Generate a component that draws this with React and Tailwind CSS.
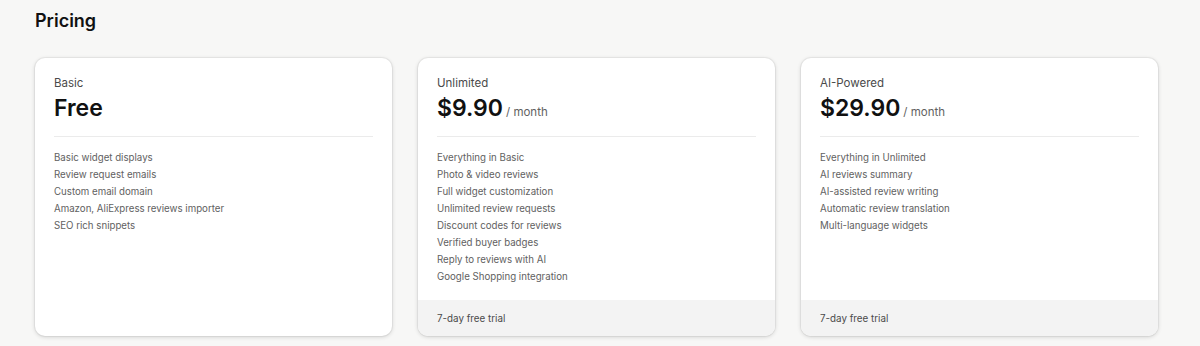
import React from "react";

const plans = [
  {
    name: "Basic",
    price: "Free",
    per: null,
    features: [
      "Basic widget displays",
      "Review request emails",
      "Custom email domain",
      "Amazon, AliExpress reviews importer",
      "SEO rich snippets",
    ],
    footer: null,
  },
  {
    name: "Unlimited",
    price: "$9.90",
    per: "/ month",
    features: [
      "Everything in Basic",
      "Photo & video reviews",
      "Full widget customization",
      "Unlimited review requests",
      "Discount codes for reviews",
      "Verified buyer badges",
      "Reply to reviews with AI",
      "Google Shopping integration",
    ],
    footer: "7-day free trial",
  },
  {
    name: "AI-Powered",
    price: "$29.90",
    per: "/ month",
    features: [
      "Everything in Unlimited",
      "AI reviews summary",
      "AI-assisted review writing",
      "Automatic review translation",
      "Multi-language widgets",
    ],
    footer: "7-day free trial",
  },
];

function Card({ plan }) {
  return (
    <div className="flex flex-col overflow-hidden rounded-[10px] bg-white shadow-[0_0_0_1px_rgba(0,0,0,0.04),0_1px_4px_rgba(0,0,0,0.16)]">
      <div className="flex-1 px-[19px] pt-4 pb-[15px]">
        <div className="text-[11.5px] leading-[18px] text-[#4a4a4a]">{plan.name}</div>
        <div className="mt-[2px] flex items-baseline">
          <span className="text-[23px] leading-[28px] font-semibold text-[#111]">{plan.price}</span>
          {plan.per && (
            <span className="ml-[3px] text-[11.5px] text-[#616161]">{plan.per}</span>
          )}
        </div>
        <div className="mt-[14px] h-px bg-[#ebebeb]" />
        <ul className="mt-3">
          {plan.features.map((f) => (
            <li key={f} className="text-[9.7px] leading-[17px] text-[#616161]">
              {f}
            </li>
          ))}
        </ul>
      </div>
      {plan.footer && (
        <div className="bg-[#f3f3f3] px-[19px] pt-[11px] pb-[9px] text-[9.8px] leading-4 text-[#4a4a4a]">
          {plan.footer}
        </div>
      )}
    </div>
  );
}

export default function App() {
  return (
    <div
      className="min-h-[346px] bg-[#f7f7f6] pl-[35px] pt-[9px]"
      style={{ fontFamily: "Inter, 'Noto Sans', sans-serif" }}
    >
      <h1 className="text-[18px] leading-6 font-semibold text-[#111]">Pricing</h1>
      <div className="mt-[25px] grid w-[1123px] grid-cols-3 gap-[26px]">
        {plans.map((p) => (
          <Card key={p.name} plan={p} />
        ))}
      </div>
    </div>
  );
}
